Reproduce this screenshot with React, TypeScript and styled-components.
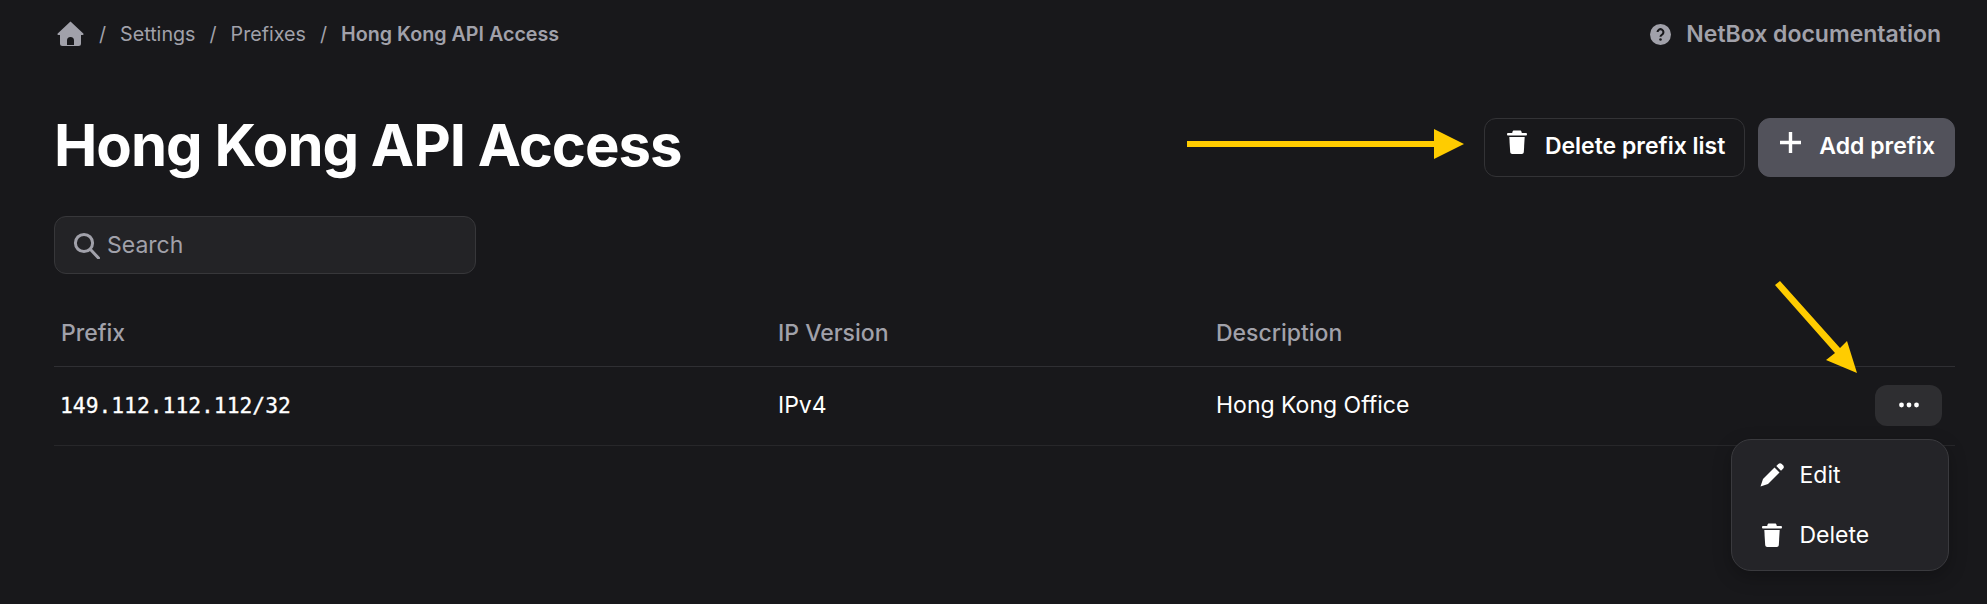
import React from "react";
import styled, { createGlobalStyle } from "styled-components";

const GlobalStyle = createGlobalStyle`
  html, body {
    margin: 0;
    padding: 0;
    background: #18181b;
    font-family: Inter, "Liberation Sans", sans-serif;
  }
`;

const Page = styled("div")`
  position: relative;
  width: 1987px;
  height: 604px;
  overflow: hidden;
  box-sizing: border-box;
  padding: 0 32px 0 54px;
  background: #18181b;
  color: #fff;
`;

const TopBar = styled("div")`
  display: flex;
  align-items: center;
  justify-content: space-between;
  height: 68px;
  padding: 0 14px 0 3px;
`;

const Crumbs = styled("nav")`
  display: flex;
  align-items: center;
  gap: 14px;
  font-size: 19.7px;
  color: #a1a1aa;

  svg {
    margin-right: 1px;
  }
`;

const Crumb = styled("span")<{ $current?: boolean }>`
  font-weight: ${(p) => (p.$current ? 600 : 400)};
`;

const DocLink = styled("a")`
  display: flex;
  align-items: center;
  gap: 15px;
  font-size: 23px;
  font-weight: 600;
  color: #a1a1aa;
`;

const TitleRow = styled("div")`
  display: flex;
  align-items: center;
  justify-content: space-between;
  margin-top: 49px;
  height: 60px;
`;

const Title = styled("h1")`
  margin: 0;
  padding-bottom: 4px;
  font-size: 58px;
  font-weight: 700;
  letter-spacing: -1px;
`;

const Actions = styled("div")`
  display: flex;
  gap: 13px;
`;

const ActionButton = styled("button")<{ $primary?: boolean }>`
  display: flex;
  align-items: center;
  box-sizing: border-box;
  height: 59px;
  padding: 0 19px 2px ${(p) => (p.$primary ? "21px" : "22px")};
  gap: 18px;
  border-radius: 12px;
  border: 1px solid ${(p) => (p.$primary ? "#52525b" : "#333336")};
  background: ${(p) => (p.$primary ? "#52525b" : "transparent")};
  color: #fff;
  font-family: inherit;
  font-size: 23px;
  font-weight: 600;

  svg {
    margin-bottom: 8px;
  }
`;

const SearchBox = styled("div")`
  display: flex;
  align-items: center;
  gap: 6px;
  box-sizing: border-box;
  width: 422px;
  height: 58px;
  margin-top: 39px;
  padding: 0 18px 1px;
  background: #232326;
  border: 1px solid #37373a;
  border-radius: 12px;
  color: #a1a1aa;
  font-size: 23px;
`;

const Row = styled("div")<{ $head?: boolean }>`
  display: grid;
  grid-template-columns: 717px 438px 1fr auto;
  align-items: center;
  box-sizing: border-box;
  height: ${(p) => (p.$head ? "93px" : "79px")};
  padding: ${(p) => (p.$head ? "26px 13px 0 7px" : "0 13px 2px 7px")};
  border-bottom: 1px solid ${(p) => (p.$head ? "#2f2f33" : "#27272a")};
  font-size: 23px;
  color: ${(p) => (p.$head ? "#a1a1aa" : "#fff")};
  font-weight: ${(p) => (p.$head ? 500 : 400)};
`;

const Mono = styled("span")`
  margin-left: -1px;
  font-family: "DejaVu Sans Mono", "Liberation Mono", monospace;
  font-size: 21.3px;
  -webkit-text-stroke: 0.3px #fff;
`;

const DotsButton = styled("button")`
  display: flex;
  align-items: center;
  justify-content: center;
  width: 67px;
  height: 41px;
  padding: 0;
  border: 0;
  border-radius: 12px;
  background: #2e2e31;
`;

const Menu = styled("div")`
  position: absolute;
  left: 1731px;
  top: 439px;
  box-sizing: border-box;
  width: 218px;
  height: 132px;
  padding: 5px 0;
  background: #242428;
  border: 1.5px solid #3a3a3e;
  border-radius: 20px;
  box-shadow: 0 6px 18px rgba(0, 0, 0, 0.25);
`;

const MenuItem = styled("div")`
  display: flex;
  align-items: center;
  gap: 16px;
  height: 60px;
  padding-left: 27.5px;
  font-size: 23px;
  font-weight: 400;
`;

const MenuIcon = styled("span")`
  display: flex;
  justify-content: center;
  width: 24px;
`;

const Annotation = styled("svg")`
  position: absolute;
  left: 0;
  top: 0;
  pointer-events: none;
`;

const TrashIcon = () => (
  <svg width="20" height="24" viewBox="0 0 20 24" fill="#fff">
    <path d="M7 0.500h6c.8 0 1.300.5 1.500 1.300L14.800 3H18.800c.7 0 1.200.5 1.200 1.200s-.5 1.300-1.200 1.300H1.200C.5 5.500 0 4.900 0 4.200S.5 3 1.200 3H5.200l.3-1.200C5.700 1 6.200.5 7 .5z" />
    <path d="M2.300 7h15.400l-.9 15c-.1 1.200-.9 2-2 2H5.200c-1.100 0-1.900-.8-2-2L2.300 7z" />
  </svg>
);

const App = () => {
  return (
    <>
      <GlobalStyle />
      <Page>
        <TopBar>
          <Crumbs>
            <svg width="27" height="26" viewBox="0 0 27 26" fill="#a1a1aa">
              <path
                fillRule="evenodd"
                d="M13.500.5 26.300 12.500c.6.6.2 1.500-.6 1.500H24V22.500a2.500 2.500 0 0 1-2.500 2.500H5.500A2.500 2.500 0 0 1 3 22.500V14H1.300c-.8 0-1.200-.9-.6-1.500L13.500.5zM10 24v-4.500a3.500 3.500 0 0 1 7 0V24H10z"
              />
            </svg>
            <span>/</span>
            <Crumb>Settings</Crumb>
            <span>/</span>
            <Crumb>Prefixes</Crumb>
            <span>/</span>
            <Crumb $current>Hong Kong API Access</Crumb>
          </Crumbs>
          <DocLink>
            <svg width="21" height="21" viewBox="0 0 20 20">
              <circle cx="10" cy="10" r="10" fill="#a1a1aa" />
              <path d="M7.200 7.700a2.800 2.800 0 1 1 4.300 2.400c-1 .6-1.500 1-1.500 2" fill="none" stroke="#18181b" strokeWidth="2" />
              <circle cx="10" cy="14.800" r="1.200" fill="#18181b" />
            </svg>
            NetBox documentation
          </DocLink>
        </TopBar>
        <TitleRow>
          <Title>Hong Kong API Access</Title>
          <Actions>
            <ActionButton>
              <TrashIcon />
              Delete prefix list
            </ActionButton>
            <ActionButton $primary>
              <svg width="21" height="21" viewBox="0 0 21 21" stroke="#fff" strokeWidth="3.400">
                <path d="M10.500 0v21M0 10.500h21" />
              </svg>
              Add prefix
            </ActionButton>
          </Actions>
        </TitleRow>
        <SearchBox>
          <svg width="28" height="28" viewBox="0 0 28 28" fill="none" stroke="#a1a1aa" strokeWidth="3" strokeLinecap="round">
            <circle cx="11" cy="12" r="8.600" />
            <path d="M17.500 18.500l8 8.500" />
          </svg>
          Search
        </SearchBox>
        <Row $head>
          <span>Prefix</span>
          <span>IP Version</span>
          <span>Description</span>
          <span />
        </Row>
        <Row>
          <Mono>149.112.112.112/32</Mono>
          <span>IPv4</span>
          <span>Hong Kong Office</span>
          <DotsButton>
            <svg width="20" height="6" viewBox="0 0 20 6" fill="#fff">
              <circle cx="2.500" cy="3" r="2.400" />
              <circle cx="10" cy="3" r="2.400" />
              <circle cx="17.500" cy="3" r="2.400" />
            </svg>
          </DotsButton>
        </Row>
        <Menu>
          <MenuItem>
            <MenuIcon>
              <svg width="24" height="24" viewBox="0 0 24 24" fill="#fff">
                <path d="M16.300 3l2-2a2.500 2.500 0 0 1 3.500 0l1.200 1.200a2.500 2.500 0 0 1 0 3.500l-2 2L16.300 3z" />
                <path d="M14.500 4.500l5 5L8 21 .5 23.500 3 16 14.500 4.500z" />
              </svg>
            </MenuIcon>
            Edit
          </MenuItem>
          <MenuItem>
            <MenuIcon>
              <TrashIcon />
            </MenuIcon>
            Delete
          </MenuItem>
        </Menu>
        <Annotation width="1987" height="604" viewBox="0 0 1987 604">
          <path d="M1187 141h247v-12l30 15-30 15v-12h-247z" fill="#ffcc00" />
          <path d="M1775 285l5-4 60 67 7-7 10 32-31-13 9-7z" fill="#ffcc00" />
        </Annotation>
      </Page>
    </>
  );
};

export default App;
